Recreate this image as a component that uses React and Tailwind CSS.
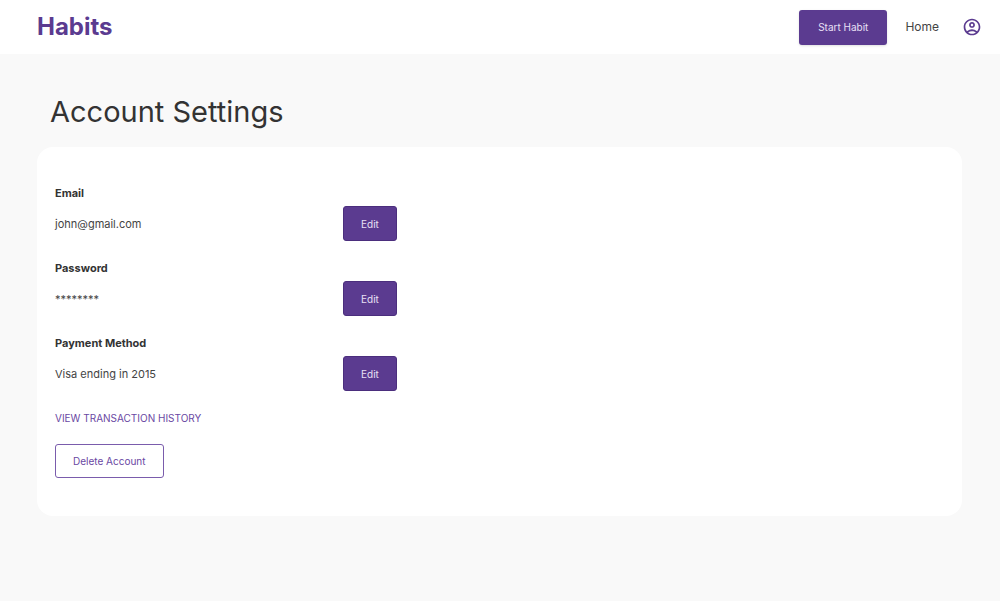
import { MdOutlineAccountCircle } from "react-icons/md";

const settings = [
    { id: "email", label: "Email", value: "john@gmail.com" },
    { id: "password", label: "Password", value: "********" },
    { id: "payment", label: "Payment Method", value: "Visa ending in 2015" },
];

const Header = () => (
    <header className="flex h-[54px] items-center justify-between bg-white pr-[18px] pl-[37px]">
        <a href="#" className="text-2xl font-bold text-[#5b3b90]">Habits</a>
        <nav className="flex items-center">
            <button className="h-[35px] rounded-[3px] bg-[#5b3b90] px-[19px] text-[10px] text-[#e9e0f5] shadow">
                Start Habit
            </button>
            <a href="#" className="ml-[18px] text-xs text-[#444444]">Home</a>
            <a href="#" aria-label="Account" className="ml-[23px] text-[#5b3b90]">
                <MdOutlineAccountCircle size={20} />
            </a>
        </nav>
    </header>
);

const SettingRow = ({ setting }) => (
    <div className="mb-[19px]">
        <dt id={setting.id} className="font-bold text-[#333333]">{setting.label}</dt>
        <dd className="mt-[5px] flex items-center">
            <span className="w-[288px] text-[#444444]">{setting.value}</span>
            <button
                aria-describedby={setting.id}
                className="h-[35px] rounded-[3px] border border-[#4b2e7d] bg-[#5b3b90] px-[17px] text-[10px] text-[#e9e0f5]"
            >
                Edit
            </button>
        </dd>
    </div>
);

const App = () => {
    return (
        <div className="min-h-screen bg-[#f9f9f9] font-['Inter',sans-serif]">
            <Header />
            <main className="pt-[39px] pr-[38px] pb-10 pl-[37px]">
                <h1 className="mb-4 px-[13px] text-[29px] leading-[38px] text-[#333333]">
                    Account Settings
                </h1>
                <section className="rounded-2xl bg-white px-[18px] py-[38px] text-[11px] leading-4">
                    <dl>
                        {settings.map((setting) => (
                            <SettingRow key={setting.id} setting={setting} />
                        ))}
                    </dl>
                    <a href="#" className="block text-[10px] leading-4 text-[#6a48a3] uppercase">
                        View Transaction History
                    </a>
                    <button className="mt-[18px] block h-[34px] rounded-[3px] border border-[#7a5cac] px-[17px] text-[10px] text-[#6a48a3]">
                        Delete Account
                    </button>
                </section>
            </main>
        </div>
    );
};

export default App;
